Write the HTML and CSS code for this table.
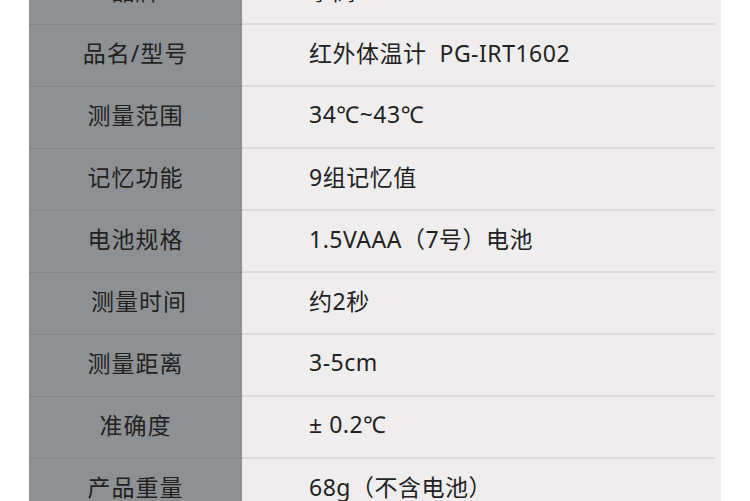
FILE: index.html
```html
<!DOCTYPE html>
<html lang="zh-CN">
<head>
    <meta charset="UTF-8">
    <meta name="viewport" content="width=device-width, initial-scale=1.0">
    <title>产品参数</title>
    <link rel="stylesheet" href="styles.css">
</head>
<body>
    <div class="spec-table">
        <div class="row">
            <div class="key">品牌</div>
            <div class="val"><div class="val-inner">攀高 PANGAO</div></div>
        </div>
        <div class="row">
            <div class="key">品名/型号</div>
            <div class="val"><div class="val-inner">红外体温计&nbsp;&nbsp;PG-IRT1602</div></div>
        </div>
        <div class="row">
            <div class="key">测量范围</div>
            <div class="val"><div class="val-inner">34℃~43℃</div></div>
        </div>
        <div class="row">
            <div class="key">记忆功能</div>
            <div class="val"><div class="val-inner">9组记忆值</div></div>
        </div>
        <div class="row">
            <div class="key">电池规格</div>
            <div class="val"><div class="val-inner">1.5VAAA（7号）电池</div></div>
        </div>
        <div class="row">
            <div class="key">&nbsp;测量时间</div>
            <div class="val"><div class="val-inner">约2秒</div></div>
        </div>
        <div class="row">
            <div class="key">测量距离</div>
            <div class="val"><div class="val-inner">3-5cm</div></div>
        </div>
        <div class="row">
            <div class="key">准确度</div>
            <div class="val"><div class="val-inner">± 0.2℃</div></div>
        </div>
        <div class="row">
            <div class="key">产品重量</div>
            <div class="val"><div class="val-inner">68g（不含电池）</div></div>
        </div>
    </div>
</body>
</html>
```

FILE: styles.css
```css
body {
    margin: 0;
    padding: 0;
    background-color: #ffffff;
    font-family: "Noto Sans", "Noto Sans CJK SC", sans-serif;
    color: #222222;
    overflow: hidden;
}
.spec-table {
    width: 692px;
    margin: -37px 0 0 29px;
}
.row {
    display: grid;
    grid-template-columns: 213px 1fr;
    height: 62px;
}
.key {
    box-sizing: border-box;
    background-color: #8e9193;
    border-bottom: 1px solid #82868a;
    padding-bottom: 8px;
    display: flex;
    align-items: center;
    justify-content: center;
    font-size: 23px;
    letter-spacing: 1px;
    white-space: pre;
}
.val {
    background-color: #efedee;
    padding-right: 6px;
}
.val-inner {
    box-sizing: border-box;
    height: 100%;
    border-bottom: 2px solid #dcdadb;
    padding: 0 0 7px 67px;
    display: flex;
    align-items: center;
    font-size: 23px;
    letter-spacing: 0.5px;
}
```
